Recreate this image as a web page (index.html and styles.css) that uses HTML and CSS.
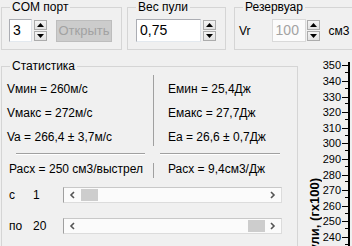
FILE: index.html
```html
<!DOCTYPE html>
<html lang="ru">
<head>
  <meta charset="UTF-8" />
  <title>Хронограф</title>
  <link rel="stylesheet" href="styles.css">
</head>
<body>
  <div class="window">
    <div class="top-row">
      <fieldset class="group group-com">
        <legend>COM порт</legend>
        <div class="row">
          <div class="edit edit-com">3</div>
          <div class="spin">
            <span class="spin-btn up"><svg width="7" height="4" viewBox="0 0 7 4"><polygon points="0,4 7,4 3.5,0" /></svg></span>
            <span class="spin-btn down"><svg width="7" height="4" viewBox="0 0 7 4"><polygon points="0,0 7,0 3.5,4" /></svg></span>
          </div>
          <button class="btn" disabled>Открыть</button>
        </div>
      </fieldset>

      <fieldset class="group group-weight">
        <legend>Вес пули</legend>
        <div class="row">
          <div class="edit edit-weight">0,75</div>
          <div class="spin">
            <span class="spin-btn up"><svg width="7" height="4" viewBox="0 0 7 4"><polygon points="0,4 7,4 3.5,0" /></svg></span>
            <span class="spin-btn down"><svg width="7" height="4" viewBox="0 0 7 4"><polygon points="0,0 7,0 3.5,4" /></svg></span>
          </div>
        </div>
      </fieldset>

      <fieldset class="group group-tank">
        <legend>Резервуар</legend>
        <div class="row">
          <span class="tank-label">Vr</span>
          <div class="edit edit-tank disabled">100</div>
          <div class="spin">
            <span class="spin-btn up"><svg width="7" height="4" viewBox="0 0 7 4"><polygon points="0,4 7,4 3.5,0" /></svg></span>
            <span class="spin-btn down"><svg width="7" height="4" viewBox="0 0 7 4"><polygon points="0,0 7,0 3.5,4" /></svg></span>
          </div>
          <span class="tank-unit">см3</span>
        </div>
      </fieldset>
    </div>

    <div class="main-row">
      <fieldset class="group group-stats">
        <legend>Статистика</legend>
        <div class="stats">
          <div class="cell cell-left">
            <div class="line">Vмин = 260м/с</div>
            <div class="line">Vмакс = 272м/с</div>
            <div class="line">Va = 266,4 ± 3,7м/с</div>
          </div>
          <div class="vline vline-top"></div>
          <div class="cell cell-right">
            <div class="line">Емин = 25,4Дж</div>
            <div class="line">Емакс = 27,7Дж</div>
            <div class="line">Ea = 26,6 ± 0,7Дж</div>
          </div>

          <div class="hline hline-left"></div>
          <div></div>
          <div class="hline hline-right"></div>

          <div class="cell cell-use-left">Расх = 250 см3/выстрел</div>
          <div class="vline vline-bottom"></div>
          <div class="cell cell-use-right">Расх = 9,4см3/Дж</div>
        </div>

        <div class="range-row range-from">
          <span class="range-label">с</span>
          <span class="range-value">1</span>
          <div class="scroll">
            <span class="scroll-btn"><svg width="6" height="8" viewBox="0 0 6 8"><polyline points="5,1 2,4 5,7" /></svg></span>
            <div class="track"><span class="thumb"></span></div>
            <span class="scroll-btn"><svg width="6" height="8" viewBox="0 0 6 8"><polyline points="1,1 4,4 1,7" /></svg></span>
          </div>
        </div>

        <div class="range-row range-to">
          <span class="range-label">по</span>
          <span class="range-value">20</span>
          <div class="scroll">
            <span class="scroll-btn"><svg width="6" height="8" viewBox="0 0 6 8"><polyline points="5,1 2,4 5,7" /></svg></span>
            <div class="track track-end"><span class="thumb"></span></div>
            <span class="scroll-btn"><svg width="6" height="8" viewBox="0 0 6 8"><polyline points="1,1 4,4 1,7" /></svg></span>
          </div>
        </div>
      </fieldset>

      <div class="chart">
        <div class="axis"></div>
        <div class="ticks">
          <div class="tick"><span>350</span></div>
          <div class="tick"><span>340</span></div>
          <div class="tick"><span>330</span></div>
          <div class="tick"><span>320</span></div>
          <div class="tick"><span>310</span></div>
          <div class="tick"><span>300</span></div>
          <div class="tick"><span>290</span></div>
          <div class="tick"><span>280</span></div>
          <div class="tick"><span>270</span></div>
          <div class="tick"><span>260</span></div>
          <div class="tick"><span>250</span></div>
          <div class="tick"><span>240</span></div>
        </div>
        <div class="axis-title">Скорость пули, (гх100)</div>
      </div>
    </div>
  </div>
</body>
</html>
```

FILE: styles.css
```css
html, body {
  margin: 0;
  padding: 0;
  height: 100%;
  overflow: hidden;
  background: #f0f0f0;
  font-family: "Liberation Sans", Arial, sans-serif;
  font-size: 11px;
  color: #000;
}
.window {
  width: 352px;
  height: 246px;
  overflow: hidden;
}

/* group boxes */
.group {
  margin: 0;
  padding: 0;
  min-width: 0;
  box-sizing: border-box;
  border: 1px solid #d5d5d5;
}
.group legend {
  margin-left: 8px;
  padding: 0 2px;
  line-height: 12px;
  font-size: 12px;
}

.top-row {
  display: flex;
  align-items: flex-start;
  padding: 1px 0 0 1px;
  width: 420px;
}
.group-com {
  width: 121px;
  height: 49px;
}
.group-weight {
  width: 99px;
  height: 49px;
  margin-left: 5px;
}
.group-tank {
  width: 140px;
  height: 49px;
  margin-left: 8px;
}

.row {
  display: flex;
  align-items: center;
  margin-top: 6px;
}
.group-com .row { padding-left: 7px; }
.group-weight .row { padding-left: 8px; }
.group-tank .row { padding-left: 4px; }

.edit {
  box-sizing: border-box;
  height: 23px;
  border: 1px solid #abadb3;
  border-right-color: #dbdfe6;
  border-bottom-color: #e3e9ef;
  background: #fff;
  font-size: 14px;
  line-height: 21px;
  padding-left: 3px;
}
.edit-com { width: 23px; }
.edit-weight { width: 65px; }
.edit-tank {
  width: 34px;
  margin-left: 21px;
}
.edit.disabled {
  color: #a3a3a3;
  border-color: #d9d9d9;
  background: #fbfbfb;
}

.spin {
  display: flex;
  flex-direction: column;
  gap: 1px;
  margin-left: 2px;
}
.spin-btn {
  box-sizing: border-box;
  width: 13px;
  height: 10px;
  display: flex;
  align-items: center;
  justify-content: center;
  border: 1px solid #acacac;
  background: linear-gradient(#f4f4f4, #e2e2e2);
}
.spin-btn svg { fill: #000; }
.edit-weight + .spin { margin-left: 2px; }
.edit-tank + .spin { margin-left: 1px; }

.btn {
  box-sizing: border-box;
  width: 56px;
  height: 22px;
  margin-left: 9px;
  padding: 0;
  border: 1px solid #bdbdbd;
  background: #cccccc;
  color: #a2a2a2;
  font-family: "Liberation Sans", Arial, sans-serif;
  font-size: 13px;
}

.tank-label { font-size: 12px; }
.tank-unit {
  font-size: 12px;
  margin-left: 9px;
}

/* statistics */
.main-row {
  display: flex;
  align-items: flex-start;
  padding-left: 1px;
}
.group-stats {
  width: 297px;
  height: 200px;
  margin-top: 10px;
}
.stats {
  display: grid;
  grid-template-columns: 151px 1px 1fr;
  grid-template-rows: 77px 11px 18px;
}
.cell {
  font-size: 12px;
}
.cell-left, .cell-right {
  padding-top: 5px;
}
.cell-left { padding-left: 5px; }
.cell-right { padding-left: 14px; }
.line { line-height: 24px; }
.cell-use-left {
  padding-left: 7px;
  line-height: 18px;
}
.cell-use-right {
  padding-left: 14px;
  line-height: 18px;
}
.vline {
  background: #a0a0a0;
  margin-top: 3px;
}
.vline-top { height: 71px; }
.vline-bottom { height: 15px; }
.hline {
  height: 1px;
  margin-top: 4px;
  background: #a0a0a0;
  box-shadow: 0 1px 0 #fff;
}
.hline-left { margin-left: 14px; margin-right: 8px; }
.hline-right { margin-left: 6px; width: 120px; }

.range-row {
  display: flex;
  align-items: center;
  padding-left: 7px;
  font-size: 12px;
}
.range-from { margin-top: 9px; }
.range-to { margin-top: 15px; }
.range-label { width: 24px; }
.range-value { width: 30px; }
.scroll {
  box-sizing: border-box;
  width: 219px;
  height: 16px;
  display: flex;
  border: 1px solid #dcdcdc;
  border-left-color: #a0a0a0;
  border-top-color: #c8c8c8;
  background: #fbfbfb;
}
.scroll-btn {
  width: 16px;
  display: flex;
  align-items: center;
  justify-content: center;
}
.scroll-btn svg {
  fill: none;
  stroke: #555;
  stroke-width: 1.6;
}
.track {
  flex: 1;
  display: flex;
  align-items: center;
}
.track-end { justify-content: flex-end; }
.thumb {
  width: 17px;
  height: 12px;
  margin-left: 1px;
  background: #cdcdcd;
}

/* chart */
.chart {
  position: relative;
  flex: 1;
  height: 196px;
}
.axis {
  position: absolute;
  left: 50px;
  top: 12px;
  bottom: 0;
  width: 2px;
  background: #000;
}
.ticks {
  position: absolute;
  left: 0;
  top: 7.7px;
  width: 50px;
  display: flex;
  flex-direction: column;
}
.tick {
  position: relative;
  height: 15.6px;
  display: flex;
  align-items: center;
  justify-content: flex-end;
}
.tick span {
  font-size: 11px;
  line-height: 12px;
  margin-right: 7px;
}
.tick::before {
  content: '';
  position: absolute;
  right: 0;
  top: 50%;
  width: 6px;
  height: 1px;
  background: #000;
}
.tick::after {
  content: '';
  position: absolute;
  right: 0;
  bottom: 0;
  width: 3px;
  height: 1px;
  background: #000;
}
.axis-title {
  position: absolute;
  left: 9px;
  top: 128px;
  writing-mode: vertical-rl;
  transform: rotate(180deg);
  font-weight: bold;
  font-size: 13px;
  white-space: nowrap;
}
```
